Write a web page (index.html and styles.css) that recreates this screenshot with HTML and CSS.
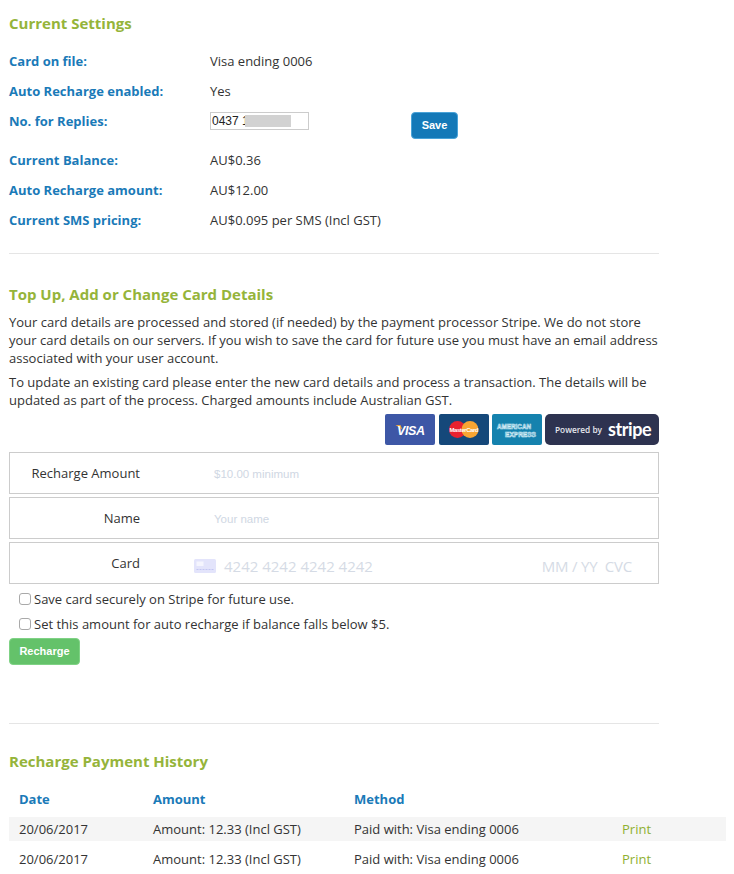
FILE: index.html
```html
<!DOCTYPE html>
<html lang="en">
<head>
<meta charset="utf-8">
<title>Recharge</title>
<link rel="stylesheet" href="styles.css">
</head>
<body>
<main class="page">
  <section class="section settings">
    <h2 class="heading">Current Settings</h2>
    <div class="facts">
      <div class="fact"><span class="fact-label">Card on file:</span><span>Visa ending 0006</span></div>
      <div class="fact"><span class="fact-label">Auto Recharge enabled:</span><span>Yes</span></div>
      <div class="fact fact-reply">
        <span class="fact-label">No. for Replies:</span>
        <span class="reply-cell">
          <span class="phone">0437 1<span class="redact"></span></span>
          <button class="btn btn-blue" type="button">Save</button>
        </span>
      </div>
      <div class="fact"><span class="fact-label">Current Balance:</span><span>AU$0.36</span></div>
      <div class="fact"><span class="fact-label">Auto Recharge amount:</span><span>AU$12.00</span></div>
      <div class="fact"><span class="fact-label">Current SMS pricing:</span><span>AU$0.095 per SMS (Incl GST)</span></div>
    </div>
  </section>

  <section class="section topup">
    <h2 class="heading">Top Up, Add or Change Card Details</h2>
    <p class="copy">Your card details are processed and stored (if needed) by the payment processor Stripe. We do not store your card details on our servers. If you wish to save the card for future use you must have an email address associated with your user account.</p>
    <p class="copy">To update an existing card please enter the new card details and process a transaction. The details will be updated as part of the process. Charged amounts include Australian GST.</p>

    <div class="badges">
      <svg class="badge badge-visa" width="50" height="31" viewBox="0 0 50 31" role="img" aria-label="Visa">
        <rect width="50" height="31" rx="2" fill="#3d57a6"/>
        <path d="M10.5 11h5l1.8 4.5z" fill="#e6a33c"/>
        <text x="12" y="20.5" class="visa-text" textLength="28">VISA</text>
      </svg>
      <svg class="badge" width="50" height="31" viewBox="0 0 50 31" role="img" aria-label="MasterCard">
        <rect width="50" height="31" rx="2" fill="#15487a"/>
        <circle cx="18.5" cy="15.5" r="8.5" fill="#e8222f"/>
        <circle cx="31" cy="15.5" r="8.5" fill="#f9a533"/>
        <text x="25" y="17.6" class="mc-text" textLength="29">MasterCard</text>
      </svg>
      <svg class="badge" width="50" height="31" viewBox="0 0 50 31" role="img" aria-label="American Express">
        <rect width="50" height="31" rx="2" fill="#1582ae"/>
        <text x="5" y="14.5" class="amex-text" textLength="34" lengthAdjust="spacingAndGlyphs">AMERICAN</text>
        <text x="13" y="22.5" class="amex-text" textLength="31" lengthAdjust="spacingAndGlyphs">EXPRESS</text>
      </svg>
      <div class="stripe-badge"><span class="powered">Powered by</span><span class="stripe-word">stripe</span></div>
    </div>

    <form class="card-form">
      <div class="field">
        <span class="field-label">Recharge Amount</span>
        <span class="placeholder">$10.00 minimum</span>
      </div>
      <div class="field">
        <span class="field-label">Name</span>
        <span class="placeholder">Your name</span>
      </div>
      <div class="field field-card">
        <span class="field-label">Card</span>
        <svg class="card-icon" width="22" height="14" viewBox="0 0 22 14" aria-hidden="true">
          <rect width="22" height="14" rx="1.5" fill="#e3e4fb"/>
          <rect x="2.5" y="2.5" width="7" height="4.5" fill="#f5f5fe"/>
          <path d="M2.5 10.5h17" stroke="#c3c6f2" stroke-width="1" stroke-dasharray="2 1"/>
        </svg>
        <span class="card-number">4242 4242 4242 4242</span>
        <span class="card-rest">MM / YY&nbsp; CVC</span>
      </div>
      <label class="check"><input type="checkbox"><span>Save card securely on Stripe for future use.</span></label>
      <label class="check"><input type="checkbox"><span>Set this amount for auto recharge if balance falls below $5.</span></label>
      <button class="btn btn-green" type="button">Recharge</button>
    </form>
  </section>

  <section class="history">
    <h2 class="heading">Recharge Payment History</h2>
    <table class="table">
      <thead>
        <tr><th>Date</th><th>Amount</th><th>Method</th><th></th></tr>
      </thead>
      <tbody>
        <tr class="alt"><td>20/06/2017</td><td>Amount: 12.33 (Incl GST)</td><td>Paid with: Visa ending 0006</td><td class="print">Print</td></tr>
        <tr><td>20/06/2017</td><td>Amount: 12.33 (Incl GST)</td><td>Paid with: Visa ending 0006</td><td class="print">Print</td></tr>
      </tbody>
    </table>
  </section>
</main>
</body>
</html>
```
FILE: styles.css
```css
* { box-sizing: border-box; }
html, body { margin: 0; padding: 0; background: #fff; }
body {
  font-family: "Open Sans", "Liberation Sans", sans-serif;
  font-size: 13px;
  line-height: 18px;
  color: #333;
  height: 874px;
  overflow: hidden;
}
.page { padding: 0 0 0 9px; }
.section { width: 650px; border-bottom: 1px solid #e5e5e5; }
.heading {
  margin: 0;
  font-size: 15px;
  line-height: 22px;
  font-weight: 700;
  color: #95b43a;
}
.settings { padding-top: 12px; height: 254px; }
.facts { margin-top: 12px; }
.fact { display: flex; align-items: center; height: 30px; }
.fact-label { width: 201px; flex: none; font-weight: 700; color: #1a7ab8; }
.fact-reply { height: 39px; align-items: flex-start; }
.fact-reply .fact-label { padding-top: 6px; }
.reply-cell { display: flex; align-items: flex-start; padding-top: 6px; }
.phone {
  position: relative;
  display: block;
  width: 99px;
  height: 18px;
  border: 1px solid #ccc;
  padding-left: 1px;
  font: 12px/16px "Liberation Sans", Arial, sans-serif;
  color: #222;
}
.redact { position: absolute; left: 34px; top: 2px; width: 46px; height: 12px; background: #d2d2d2; }
.btn {
  border: 1px solid #4aa3d8;
  border-radius: 4px;
  font: 700 11px/1 "Liberation Sans", Arial, sans-serif;
  color: #fff;
  padding: 0;
}
.btn-blue { width: 47px; height: 27px; margin: 0 0 0 102px; background: #1479b8; }
.btn-green { display: block; width: 71px; height: 27px; margin: 2px 0 0; background: #64c26a; border-color: #7fd285; }
.topup { padding-top: 29px; height: 470px; }
.copy { margin: 0 0 6px; line-height: 18px; }
.copy + .copy { margin-bottom: 5px; }
.heading + .copy { margin-top: 8px; }
.badges { display: flex; justify-content: flex-end; gap: 3px; height: 31px; }
.badge { display: block; flex: none; }
.badge-visa { margin-right: 1px; }
.visa-text { font: italic 700 12.5px "Liberation Sans", Arial, sans-serif; fill: #fff; }
.mc-text { font: 700 6px "Liberation Sans", Arial, sans-serif; fill: #fff; text-anchor: middle; }
.amex-text { font: 700 7px "Liberation Sans", Arial, sans-serif; fill: #1582ae; stroke: #d7eef7; stroke-width: .6px; }
.stripe-badge {
  width: 114px;
  height: 31px;
  border-radius: 5px;
  background: #2e3350;
  color: #fff;
  display: flex;
  align-items: center;
  gap: 6px;
  padding-left: 10px;
}
.powered { font-size: 8.3px; font-weight: 600; color: #e6e7ee; white-space: nowrap; }
.stripe-word { font-family: Lato, "Open Sans", sans-serif; font-size: 18px; font-weight: 700; letter-spacing: -.4px; line-height: 1; margin-top: -2px; }
.card-form { margin-top: 7px; }
.field {
  height: 42px;
  margin-bottom: 3px;
  border: 1px solid #ccc;
  display: flex;
  align-items: center;
}
.field-label { width: 130px; flex: none; text-align: right; }
.placeholder { margin: 2px 0 0 74px; font: 11.5px "Liberation Sans", Arial, sans-serif; color: #cfd7e3; }
.field-card { margin-bottom: 2px; }
.card-icon { margin: 6px 0 0 54px; flex: none; }
.card-number { margin: 6px 0 0 8px; font-size: 15px; color: #d5dbe5; }
.card-rest { margin: 6px 26px 0 auto; font-size: 15px; letter-spacing: -.2px; color: #d5dbe5; }
.check { display: flex; align-items: center; height: 25px; padding-left: 10px; }
.check input {
  appearance: none;
  width: 12px;
  height: 12px;
  margin: 1px 3px 0 0;
  border: 1px solid #a9a9a9;
  border-radius: 3px;
  background: #fff;
  flex: none;
}
.history { padding-top: 26px; }
.table { width: 717px; margin-top: 9px; border-collapse: separate; border-spacing: 0 6px; table-layout: fixed; }
.table th, .table td { height: 24px; padding: 0 0 0 10px; text-align: left; }
.table th { font-weight: 700; color: #1a7ab8; }
.table th:nth-child(1) { width: 134px; }
.table th:nth-child(2) { width: 201px; }
.table th:nth-child(3) { width: 268px; }
.table .alt td { background: #f5f5f5; }
.table td.print { color: #8fb030; }
```
